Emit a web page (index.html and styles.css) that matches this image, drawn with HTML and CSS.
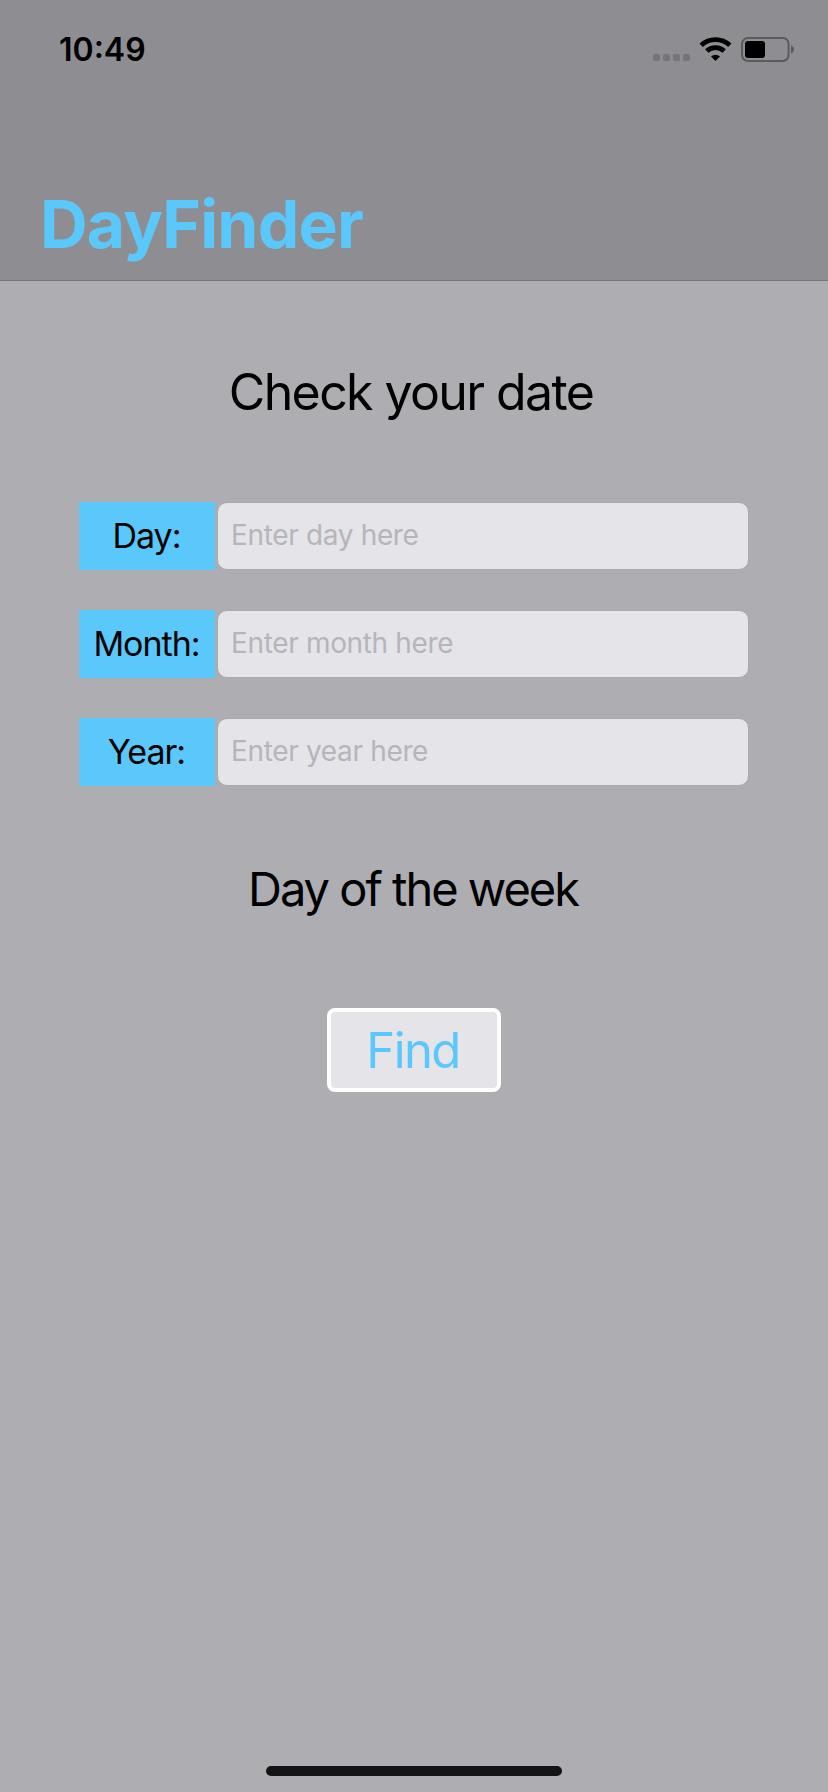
FILE: index.html
```html
<!DOCTYPE html>
<html lang="en">
<head>
<meta charset="utf-8">
<title>DayFinder</title>
<link rel="stylesheet" href="styles.css">
</head>
<body>
<header class="navbar">
  <div class="status">
    <span class="time">10:49</span>
    <svg class="status-icons" width="146" height="30" viewBox="0 0 146 30">
      <g fill="#757579">
        <rect x="1" y="19" width="7" height="7" rx="1.8"/>
        <rect x="11" y="19" width="7" height="7" rx="1.8"/>
        <rect x="21" y="19" width="7" height="7" rx="1.8"/>
        <rect x="31" y="19" width="7" height="7" rx="1.8"/>
      </g>
      <g fill="none" stroke="#000" stroke-width="4.8">
        <path d="M49.2 10.3A20.8 20.8 0 0 1 77.8 10.3"/>
        <path d="M54.8 16.1A12.6 12.6 0 0 1 72.2 16.1"/>
      </g>
      <path d="M63.5 26L59 21.5A6.6 6.6 0 0 1 68 21.5Z"/>
      <rect x="90" y="3.1" width="46.6" height="22.8" rx="5.8" fill="none" stroke="#5b5b5e" stroke-width="2"/>
      <rect x="93" y="6" width="20" height="17" rx="3"/>
      <path d="M139 10.5C143 12 143 17 139 18.5Z" fill="#5b5b5e"/>
    </svg>
  </div>
  <h1 class="title">DayFinder</h1>
</header>
<main class="content">
  <h2 class="prompt">Check your date</h2>
  <form class="fields">
    <div class="row">
      <label class="label" for="day">Day:</label>
      <input class="input" id="day" type="text" placeholder="Enter day here">
    </div>
    <div class="row">
      <label class="label" for="month">Month:</label>
      <input class="input" id="month" type="text" placeholder="Enter month here">
    </div>
    <div class="row">
      <label class="label" for="year">Year:</label>
      <input class="input" id="year" type="text" placeholder="Enter year here">
    </div>
  </form>
  <p class="result">Day of the week</p>
  <button class="find" type="button">Find</button>
</main>
<div class="home-indicator"></div>
</body>
</html>
```
FILE: styles.css
```css
* {
  box-sizing: border-box;
}

body {
  margin: 0;
  height: 1792px;
  display: flex;
  flex-direction: column;
  align-items: center;
  background: #aeadb2;
  color: #000;
  font-family: Inter, "Liberation Sans", sans-serif;
}

.navbar {
  width: 100%;
  height: 281px;
  padding-top: 30px;
  background: #8e8d92;
  border-bottom: 1px solid #77767b;
}

.status {
  display: flex;
  justify-content: space-between;
  align-items: flex-start;
  height: 154px;
  padding: 0 30px 0 59px;
}

.time {
  font-size: 32px;
  font-weight: 600;
  line-height: 40px;
}

.status-icons {
  margin-top: 5px;
}

.title {
  margin: 0;
  padding-left: 40px;
  font-size: 66px;
  font-weight: 700;
  line-height: 80px;
  letter-spacing: -0.8px;
  color: #5bc8fc;
}

.content {
  flex: 1;
  width: 100%;
  display: flex;
  flex-direction: column;
  align-items: center;
  padding-top: 81px;
}

.prompt {
  margin: 0;
  padding-right: 6px;
  font-size: 50px;
  font-weight: 400;
  line-height: 60px;
  letter-spacing: -1.6px;
}

.fields {
  display: flex;
  flex-direction: column;
  gap: 40px;
  width: 670px;
  margin-top: 80px;
}

.row {
  display: flex;
  align-items: center;
  gap: 2px;
  height: 68px;
}

.label {
  width: 136px;
  padding-right: 1px;
  line-height: 68px;
  text-align: center;
  font-size: 34px;
  letter-spacing: -1px;
  background: #5bc8fc;
}

.input {
  flex: 1;
  min-width: 0;
  height: 68px;
  padding: 0 12px 2px 13px;
  border: 1px solid #a9a8ad;
  border-radius: 10px;
  background: #e5e4e9;
  font-family: inherit;
  font-size: 28px;
  letter-spacing: -0.34px;
}

.input::placeholder {
  color: #b6b5ba;
  opacity: 1;
}

.result {
  margin: 73px 0 0;
  padding-right: 2px;
  font-size: 47px;
  line-height: 60px;
  letter-spacing: -2px;
}

.find {
  width: 174px;
  height: 84px;
  margin-top: 89px;
  padding: 0 2px 0 0;
  border: 4px solid #fff;
  border-radius: 8px;
  background: #e5e4e9;
  color: #5bc8fc;
  font-family: inherit;
  font-size: 49px;
  letter-spacing: -1.6px;
}

.home-indicator {
  width: 296px;
  height: 10px;
  margin-bottom: 16px;
  border-radius: 5px;
  background: #141414;
}
```
